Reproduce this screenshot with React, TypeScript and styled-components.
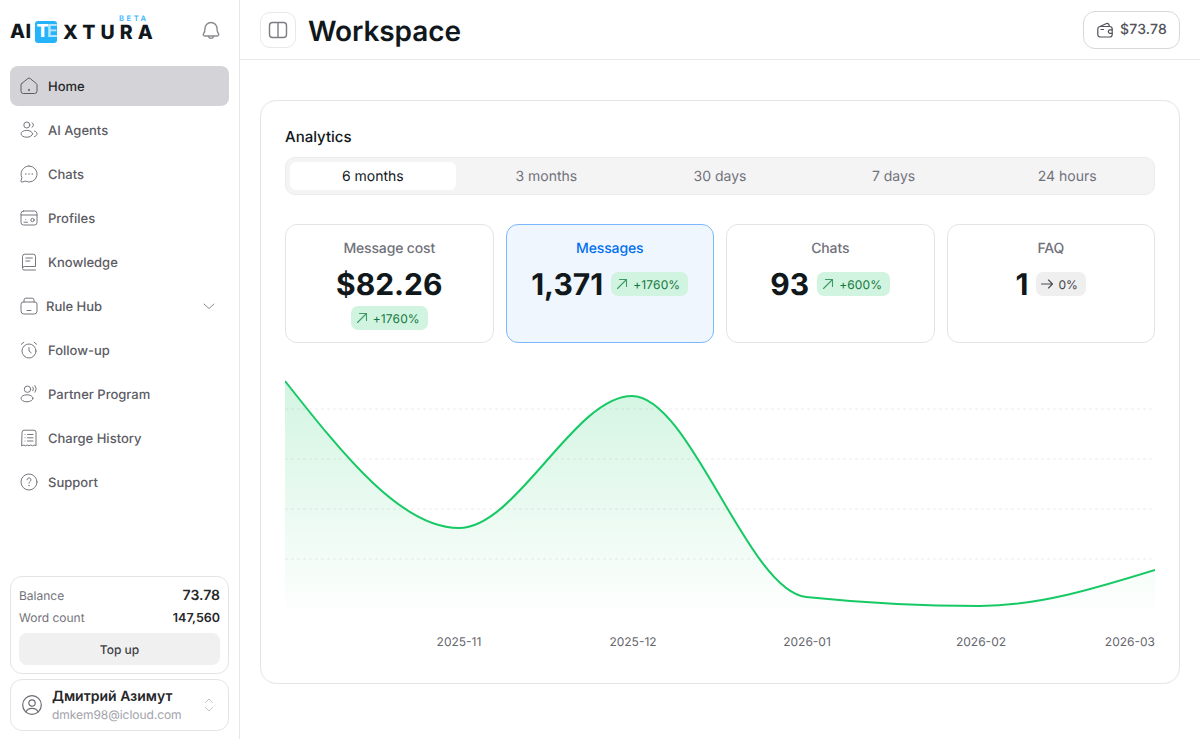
import React from "react";
import styled, { createGlobalStyle } from "styled-components";

const Global = createGlobalStyle`
  html, body { margin: 0; padding: 0; background: #fff; }
  body {
    font-family: Inter, "Liberation Sans", "Noto Sans CJK SC", sans-serif;
    color: #11181c;
    overflow: hidden;
    text-rendering: geometricPrecision;
  }
  * { box-sizing: border-box; }
`;

const Page = styled.div`
  display: flex;
  width: 1200px;
  height: 739px;
`;
const Sidebar = styled.aside`
  width: 240px;
  flex: none;
  border-right: 1px solid #e8e8ea;
  padding: 0 10px 8px;
  display: flex;
  flex-direction: column;
`;
const Brand = styled.div`
  height: 66px;
  display: flex;
  align-items: flex-start;
  justify-content: space-between;
  padding: 21px 8px 0 0;
`;
const Logo = styled.div`
  position: relative;
  display: flex;
  align-items: center;
  height: 22px;
  font-weight: 800;
  font-size: 19.5px;
  color: #11181c;
  line-height: 1;
`;
const LogoAi = styled.span`
  width: 25px;
  letter-spacing: 0.5px;
`;
const LogoMark = styled.span`
  width: 22px;
  height: 22px;
  border-radius: 3px;
  background: #25b3fb;
  color: #fff;
  display: flex;
  align-items: center;
  justify-content: center;
  font-size: 18px;
  font-weight: 800;
  letter-spacing: -2px;
  margin-right: 6px;
`;
const LogoMarkE = styled.span`
  color: #b5e6ff;
  font-weight: 600;
`;
const LogoRest = styled.span`
  letter-spacing: 5.1px;
  font-size: 19.5px;
  line-height: 15px;
  white-space: nowrap;
`;
const Beta = styled.span`
  position: absolute;
  left: 109px;
  top: -5px;
  font-size: 7.5px;
  line-height: 6px;
  font-weight: 600;
  letter-spacing: 2.6px;
  color: #38b6ff;
`;
const BellBtn = styled.span`
  display: flex;
  color: #8a8a90;
`;
const Nav = styled.nav`
  display: flex;
  flex-direction: column;
  gap: 4px;
`;
const NavItem = styled.div<{ $active?: boolean; $tight?: boolean }>`
  height: 40px;
  border-radius: 8px;
  display: flex;
  align-items: center;
  gap: ${(p) => (p.$tight ? "7px" : "9px")};
  padding: 0 13px 0 9px;
  background: ${(p) => (p.$active ? "#d4d4d8" : "transparent")};
  color: ${(p) => (p.$active ? "#27272a" : "#5c5c64")};
  font-size: 13px;
  font-weight: 500;
`;
const NavLabel = styled.span`
  margin-top: 2px;
`;
const NavIcon = styled.span<{ $active?: boolean }>`
  display: flex;
  color: ${(p) => (p.$active ? "#5c5c64" : "#77777f")};
`;
const NavChevron = styled.span`
  margin-left: auto;
  display: flex;
  color: #8a8a90;
`;
const Foot = styled.div`
  margin-top: auto;
  display: flex;
  flex-direction: column;
  gap: 5px;
`;
const BalanceCard = styled.div`
  height: 98px;
  border: 1px solid #e4e4e7;
  border-radius: 12px;
  padding: 7px 8px 8px;
  display: flex;
  flex-direction: column;
`;
const BalanceRow = styled.div`
  height: 22px;
  display: flex;
  align-items: center;
  justify-content: space-between;
  font-size: 12px;
  color: #71717a;
`;
const BalanceValue = styled.span<{ $large?: boolean }>`
  font-size: ${(p) => (p.$large ? "14px" : "12.5px")};
  margin-top: ${(p) => (p.$large ? "0" : "2px")};
  font-weight: 600;
  color: #27272a;
`;
const TopUp = styled.div`
  margin-top: 5px;
  height: 32px;
  border-radius: 8px;
  background: #f0f0f1;
  display: flex;
  align-items: center;
  justify-content: center;
  font-size: 12px;
  font-weight: 500;
  color: #3f3f46;
`;
const UserCard = styled.div`
  height: 52px;
  border: 1px solid #e4e4e7;
  border-radius: 12px;
  display: flex;
  align-items: center;
  padding: 0 13px 0 11px;
  gap: 10px;
`;
const UserAvatar = styled.span`
  display: flex;
  color: #6b6b73;
`;
const UserText = styled.div`
  flex: 1;
  display: flex;
  flex-direction: column;
  gap: 2px;
`;
const UserName = styled.div`
  font-size: 14px;
  font-weight: 600;
  color: #27272a;
  line-height: 17px;
`;
const UserMail = styled.div`
  font-size: 12px;
  letter-spacing: -0.05px;
  color: #a1a1aa;
  line-height: 15px;
`;
const Sorter = styled.span`
  display: flex;
  color: #c4c4ca;
`;
const Main = styled.main`
  flex: 1;
  min-width: 0;
  display: flex;
  flex-direction: column;
`;
const Header = styled.header`
  height: 60px;
  border-bottom: 1px solid #e8e8ea;
  display: flex;
  align-items: center;
  padding: 0 20px;
  gap: 12px;
`;
const ToggleBtn = styled.span`
  width: 36px;
  height: 36px;
  border: 1px solid #e8e8ea;
  border-radius: 10px;
  display: flex;
  align-items: center;
  justify-content: center;
  color: #7c7c84;
`;
const Title = styled.h1`
  margin: 2px 0 0;
  font-size: 28px;
  font-weight: 600;
  line-height: 36px;
  letter-spacing: -0.1px;
  color: #11181c;
`;
const WalletBtn = styled.div`
  margin-left: auto;
  height: 38px;
  width: 97px;
  border: 1px solid #d8d8dc;
  border-radius: 12px;
  display: flex;
  align-items: center;
  justify-content: center;
  gap: 6px;
  font-size: 14px;
  letter-spacing: 0.15px;
  font-weight: 500;
  color: #52525b;
`;
const Content = styled.div`
  padding: 40px 20px 0;
`;
const Panel = styled.section`
  height: 584px;
  border: 1px solid #e4e4e7;
  border-radius: 16px;
  padding: 25px 24px 0;
`;
const PanelTitle = styled.h2`
  margin: 0 0 10px;
  font-size: 15px;
  font-weight: 500;
  line-height: 21px;
  color: #11181c;
`;
const Tabs = styled.div`
  height: 38px;
  border-radius: 10px;
  background: #f4f4f5;
  border: 1px solid #ececee;
  display: grid;
  grid-template-columns: repeat(5, 1fr);
  gap: 8px;
  padding: 4px;
`;
const Tab = styled.div<{ $active?: boolean }>`
  border-radius: 6px;
  display: flex;
  align-items: center;
  justify-content: center;
  font-size: 14px;
  padding-top: 1px;
  background: ${(p) => (p.$active ? "#fff" : "transparent")};
  color: ${(p) => (p.$active ? "#11181c" : "#71717a")};
`;
const Stats = styled.div`
  margin-top: 29px;
  display: grid;
  grid-template-columns: repeat(4, 1fr);
  gap: 12px;
`;
const StatCard = styled.div<{ $active?: boolean }>`
  height: 119px;
  border-radius: 12px;
  border: 1px solid ${(p) => (p.$active ? "#7cb8fb" : "#e4e4e7")};
  background: ${(p) => (p.$active ? "#eff6fe" : "#fff")};
  padding: 14px 8px 0;
  display: flex;
  flex-direction: column;
  align-items: center;
`;
const StatLabel = styled.div<{ $active?: boolean }>`
  font-size: 14px;
  line-height: 19px;
  letter-spacing: -0.15px;
  font-weight: 500;
  color: ${(p) => (p.$active ? "#006fee" : "#71717a")};
`;
const StatRow = styled.div<{ $wrap?: boolean }>`
  margin-top: 7px;
  display: flex;
  flex-direction: ${(p) => (p.$wrap ? "column" : "row")};
  align-items: center;
  justify-content: center;
  gap: ${(p) => (p.$wrap ? "3px" : "8px")};
`;
const StatValue = styled.div`
  font-size: 30px;
  line-height: 38px;
  margin: 1px 0 -1px;
  font-weight: 700;
  color: #11181c;
`;
const Badge = styled.span<{ $flat?: boolean }>`
  height: 24px;
  border-radius: 7px;
  padding: 0 8px 0 4px;
  display: inline-flex;
  align-items: center;
  gap: 4px;
  font-size: 12px;
  letter-spacing: 0.15px;
  background: ${(p) => (p.$flat ? "#efeff0" : "#d1f4e0")};
  color: ${(p) => (p.$flat ? "#3f3f46" : "#12773f")};
`;
const ChartBox = styled.div`
  margin-top: 27px;
  display: flex;
`;

const Svg = ({ children }: { children: React.ReactNode }) => (
  <svg width="20" height="20" viewBox="0 0 20 20" fill="none" stroke="currentColor" strokeWidth="1" strokeLinecap="round" strokeLinejoin="round">
    {children}
  </svg>
);

const icons: Record<string, React.ReactNode> = {
  home: <><path d="M2.600 7.600 8.900 2.500a1.700 1.700 0 0 1 2.200 0l6.300 5.100a1.600 1.600 0 0 1 .6 1.200v6.400a2.300 2.300 0 0 1-2.300 2.300H4.300A2.300 2.300 0 0 1 2 15.200V8.800a1.600 1.600 0 0 1 .6-1.200Z" /><path d="M10 13.600v1" strokeWidth="1.500" /></>,
  agents: <><circle cx="7.800" cy="5" r="3" /><ellipse cx="7.800" cy="13.800" rx="5.800" ry="3.400" /><path d="M13 2.800a2.500 2.500 0 0 1 0 4.500M15.500 11c1.500.5 2.500 1.500 2.500 2.800s-1 2.300-2.500 2.800" /></>,
  chat: <><path d="M10 2a8 8 0 1 1-3.600 15.100l-3.200.9a1 1 0 0 1-1.200-1.200l.9-3.200A8 8 0 0 1 10 2Z" /><path d="M6.800 10h.01M10 10h.01M13.200 10h.01" strokeWidth="1.500" /></>,
  profile: <><rect x="2" y="3" width="16" height="14" rx="2.500" /><path d="M2 7h16" /><circle cx="13.500" cy="12" r="1.700" /><path d="M5 14.200h3.500M6.700 11.400v.01" /></>,
  book: <><path d="M3.500 15.500V4.500A2.300 2.300 0 0 1 5.800 2.200h8.400a2.300 2.300 0 0 1 2.300 2.300v10H5.500a2 2 0 0 0-2 2 1.500 1.500 0 0 0 1.500 1.500h11.500" /><path d="M6.800 6h6.500M6.800 9h4" /></>,
  rule: <><path d="M5 6V4A1.800 1.800 0 0 1 6.800 2.200h6.400A1.800 1.800 0 0 1 15 4V6" /><path d="M2 8a2 2 0 0 1 2-2h12a2 2 0 0 1 2 2v7.200a2.800 2.800 0 0 1-2.800 2.800H4.800A2.800 2.800 0 0 1 2 15.200Z" /><path d="M8 14.500h4" /></>,
  clock: <><circle cx="10" cy="11" r="7" /><path d="M10 7.500V11l2.200 1.800" /><path d="M2.300 4.300 4.800 2.300M17.700 4.300 15.200 2.300" /></>,
  partner: <><circle cx="8.500" cy="5.200" r="3.200" /><ellipse cx="8" cy="14.300" rx="6" ry="3.500" /><path d="M13.800 3a3 3 0 0 1 0 3.800M16 1.500a5.500 5.500 0 0 1 0 6.800" /></>,
  receipt: <><path d="M3 4.200a2 2 0 0 1 2-2h10a2 2 0 0 1 2 2v13.600l-1.800-.8-1.700.8-1.700-.8-1.800.8-1.800-.8-1.700.8-1.700-.8-1.800.8Z" /><path d="M8.500 6.500H14M8.500 9.800H14M8.500 13H14M6 6.500h.01M6 9.800h.01M6 13h.01" /></>,
  help: <><circle cx="10" cy="10" r="8" /><path d="M8 7.800a2 2 0 1 1 3 1.800c-.7.400-1 .8-1 1.500" /><path d="M10 13.500v.01" strokeWidth="1.500" /></>,
};

const navItems = [
  { key: "home", label: "Home", active: true },
  { key: "agents", label: "AI Agents" },
  { key: "chat", label: "Chats" },
  { key: "profile", label: "Profiles" },
  { key: "book", label: "Knowledge" },
  { key: "rule", label: "Rule Hub", tight: true, chevron: true },
  { key: "clock", label: "Follow-up" },
  { key: "partner", label: "Partner Program" },
  { key: "receipt", label: "Charge History" },
  { key: "help", label: "Support" },
];

const tabs = ["6 months", "3 months", "30 days", "7 days", "24 hours"];

const UpArrow = () => (
  <svg width="14" height="14" viewBox="0 0 14 14" fill="none" stroke="#3d9a65" strokeWidth="1.1" strokeLinecap="round" strokeLinejoin="round">
    <path d="M2.500 11.500 11.500 2.500M4.500 2.500h7v7" />
  </svg>
);
const RightArrow = () => (
  <svg width="14" height="14" viewBox="0 0 14 14" fill="none" stroke="#4b4b52" strokeWidth="1.1" strokeLinecap="round" strokeLinejoin="round">
    <path d="M1.500 7h11M8.500 3l4 4-4 4" />
  </svg>
);

const LINE = "M0,11 C58,84.500 116,158 174,158 C231.700,158 289.300,26 347,26 C405,26 463,221 521,227 C579,233 637,236 695,236 C753.300,236 811.700,218 870,200";

const Chart = () => (
  <svg width="870" height="290" viewBox="0 0 870 290">
    <defs>
      <linearGradient id="areaFill" x1="0" y1="0" x2="0" y2="239" gradientUnits="userSpaceOnUse">
        <stop offset="0" stopColor="#17c964" stopOpacity="0.2" />
        <stop offset="1" stopColor="#17c964" stopOpacity="0.01" />
      </linearGradient>
    </defs>
    {[39, 89, 139, 189].map((y) => (
      <line key={y} x1="0" x2="870" y1={y} y2={y} stroke="#ececee" strokeDasharray="3 3" />
    ))}
    <path d={`${LINE} L870,239 L0,239 Z`} fill="url(#areaFill)" />
    <path d={LINE} fill="none" stroke="#17c964" strokeWidth="2" />
    <g fontFamily="Inter, sans-serif" fontSize="12" fill="#66666e">
      <text x="174" y="276" textAnchor="middle">2025-11</text>
      <text x="348" y="276" textAnchor="middle">2025-12</text>
      <text x="522" y="276" textAnchor="middle">2026-01</text>
      <text x="696" y="276" textAnchor="middle">2026-02</text>
      <text x="870" y="276" textAnchor="end">2026-03</text>
    </g>
  </svg>
);

export default function App() {
  return (
    <>
      <Global />
      <Page>
        <Sidebar>
          <Brand>
            <Logo>
              <LogoAi>AI</LogoAi>
              <LogoMark>T<LogoMarkE>E</LogoMarkE></LogoMark>
              <LogoRest>XTURA</LogoRest>
              <Beta>BETA</Beta>
            </Logo>
            <BellBtn>
              <svg width="20" height="20" viewBox="0 0 20 20" fill="none" stroke="currentColor" strokeWidth="1.400" strokeLinecap="round" strokeLinejoin="round">
                <path d="M10 1.500a6 6 0 0 0-6 6c0 2.500-.6 4-1.500 5.300-.7 1 0 2.200 1.200 2.200h12.600c1.200 0 1.900-1.200 1.200-2.200C16.600 11.500 16 10 16 7.500a6 6 0 0 0-6-6Z" />
                <path d="M7.500 15.500a2.600 2.600 0 0 0 5 0" />
              </svg>
            </BellBtn>
          </Brand>
          <Nav>
            {navItems.map((n) => (
              <NavItem key={n.label} $active={n.active} $tight={n.tight}>
                <NavIcon $active={n.active}><Svg>{icons[n.key]}</Svg></NavIcon>
                <NavLabel>{n.label}</NavLabel>
                {n.chevron && (
                  <NavChevron>
                    <svg width="14" height="14" viewBox="0 0 14 14" fill="none" stroke="currentColor" strokeWidth="1" strokeLinecap="round" strokeLinejoin="round">
                      <path d="M2 5 7 9.500 12 5" />
                    </svg>
                  </NavChevron>
                )}
              </NavItem>
            ))}
          </Nav>
          <Foot>
            <BalanceCard>
              <BalanceRow>
                Balance
                <BalanceValue $large>73.78</BalanceValue>
              </BalanceRow>
              <BalanceRow>
                Word count
                <BalanceValue>147,560</BalanceValue>
              </BalanceRow>
              <TopUp>Top up</TopUp>
            </BalanceCard>
            <UserCard>
              <UserAvatar>
                <svg width="20" height="20" viewBox="0 0 20 20" fill="none" stroke="currentColor" strokeWidth="1.200" strokeLinecap="round">
                  <circle cx="10" cy="10" r="9.300" />
                  <circle cx="10" cy="8" r="3.200" />
                  <path d="M4 16.800c1-2.500 3.200-3.500 6-3.500s5 1 6 3.500" />
                </svg>
              </UserAvatar>
              <UserText>
                <UserName>Дмитрий Азимут</UserName>
                <UserMail>dmkem98@icloud.com</UserMail>
              </UserText>
              <Sorter>
                <svg width="12" height="16" viewBox="0 0 12 16" fill="none" stroke="currentColor" strokeWidth="1" strokeLinecap="round" strokeLinejoin="round">
                  <path d="M2.500 5.500 6 2l3.500 3.500M2.500 10.500 6 14l3.500-3.500" />
                </svg>
              </Sorter>
            </UserCard>
          </Foot>
        </Sidebar>
        <Main>
          <Header>
            <ToggleBtn>
              <svg width="20" height="20" viewBox="0 0 20 20" fill="none" stroke="currentColor" strokeWidth="1.400">
                <rect x="1.500" y="2.500" width="17" height="15" rx="3" />
                <path d="M10 2.500v15" />
              </svg>
            </ToggleBtn>
            <Title>Workspace</Title>
            <WalletBtn>
              <svg width="18" height="18" viewBox="0 0 18 18" fill="none" stroke="currentColor" strokeWidth="1.200" strokeLinecap="round" strokeLinejoin="round">
                <path d="M4 5.500 10.500 2.500c1-.4 2.200.3 2.500 1.400l.4 1.600" />
                <rect x="1.800" y="5.500" width="14.400" height="10.500" rx="2.500" />
                <path d="M16.200 8.800h-2.500a1.800 1.800 0 0 0 0 3.500h2.500M5 8.500h2.500" />
              </svg>
              $73.78
            </WalletBtn>
          </Header>
          <Content>
            <Panel>
              <PanelTitle>Analytics</PanelTitle>
              <Tabs>
                {tabs.map((t, i) => (
                  <Tab key={t} $active={i === 0}>{t}</Tab>
                ))}
              </Tabs>
              <Stats>
                <StatCard>
                  <StatLabel>Message cost</StatLabel>
                  <StatRow $wrap>
                    <StatValue>$82.26</StatValue>
                    <Badge><UpArrow />+1760%</Badge>
                  </StatRow>
                </StatCard>
                <StatCard $active>
                  <StatLabel $active>Messages</StatLabel>
                  <StatRow>
                    <StatValue>1,371</StatValue>
                    <Badge><UpArrow />+1760%</Badge>
                  </StatRow>
                </StatCard>
                <StatCard>
                  <StatLabel>Chats</StatLabel>
                  <StatRow>
                    <StatValue>93</StatValue>
                    <Badge><UpArrow />+600%</Badge>
                  </StatRow>
                </StatCard>
                <StatCard>
                  <StatLabel>FAQ</StatLabel>
                  <StatRow>
                    <StatValue>1</StatValue>
                    <Badge $flat><RightArrow />0%</Badge>
                  </StatRow>
                </StatCard>
              </Stats>
              <ChartBox>
                <Chart />
              </ChartBox>
            </Panel>
          </Content>
        </Main>
      </Page>
    </>
  );
}
